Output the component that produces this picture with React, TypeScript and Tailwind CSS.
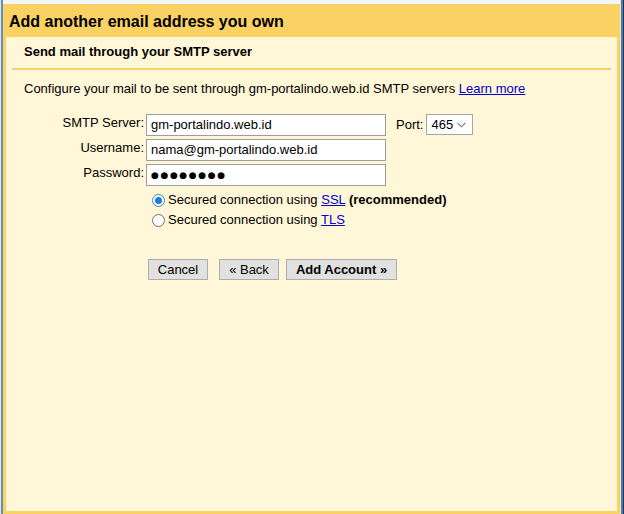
import React from "react";

function Radio({ checked }: { checked?: boolean }) {
  return (
    <span
      className={
        "flex items-center justify-center w-[13px] h-[13px] rounded-full border bg-white shrink-0 " +
        (checked ? "border-[#3c7fb1]" : "border-[#707070]")
      }
    >
      {checked ? <span className="block w-[7px] h-[7px] rounded-full bg-[#1e7bd9]" /> : null}
    </span>
  );
}

export default function App() {
  const font = { fontFamily: '"Liberation Sans", Arial, sans-serif' };
  return (
    <div className="w-[624px] h-[514px] flex overflow-hidden bg-[#f3f5f8] text-[13px] text-black" style={font}>
      {/* left frame */}
      <div className="w-[3px] h-full flex shrink-0">
        <div className="w-[1px] bg-[#dbe6f1]" />
        <div className="w-[2px] bg-[#6a8eb2]" />
      </div>

      {/* dialog */}
      <div className="w-[617px] h-full flex flex-col shrink-0">
        <div className="h-[4px] bg-[#f3f5f8]" />
        <div className="h-[33px] bg-[#fad163] flex items-center pl-[6px] pt-[2px]">
          <span className="text-[16px] font-bold leading-[18px]">Add another email address you own</span>
        </div>
        <div className="flex-1 bg-[#fad163] px-[3px] pb-[3px] flex">
          <div className="flex-1 bg-[#fff7d7] flex flex-col">
            <div className="mx-[6px] border-b-2 border-[#f5d06a] pt-[7px] pb-[8px] pl-[12px]">
              <span className="font-bold leading-[16px] block">Send mail through your SMTP server</span>
            </div>
            <div className="mt-[11px] pl-[18px] leading-[16px]">
              Configure your mail to be sent through gm-portalindo.web.id SMTP servers{" "}
              <a className="text-[#0000cc] underline" href="#">Learn more</a>
            </div>

            {/* form */}
            <div className="mt-[17px] flex flex-col gap-[3px]">
              <div className="flex items-start h-[22px]">
                <div className="w-[138px] text-right pt-[1px] leading-[16px]">SMTP Server:</div>
                <div className="ml-[2px] w-[240px] h-[22px] bg-white border border-[#9d9d9d] flex items-center pl-[4px] leading-[16px]">
                  gm-portalindo.web.id
                </div>
                <div className="ml-[10px] pt-[3px] leading-[16px]">Port:</div>
                <div className="ml-[3px] w-[47px] h-[21px] bg-white border border-[#a5a5a5] flex items-center pl-[4px] pr-[5px] justify-between">
                  <span className="leading-[16px]">465</span>
                  <svg width="9" height="6" viewBox="0 0 9 6" className="mr-[1px]">
                    <path d="M0.5 0.8 L4.5 4.8 L8.5 0.8" stroke="#7a7a7a" strokeWidth="1.1" fill="none" />
                  </svg>
                </div>
              </div>
              <div className="flex items-start h-[22px]">
                <div className="w-[138px] text-right pt-[1px] leading-[16px]">Username:</div>
                <div className="ml-[2px] w-[240px] h-[22px] bg-white border border-[#9d9d9d] flex items-center pl-[4px] leading-[16px]">
                  nama@gm-portalindo.web.id
                </div>
              </div>
              <div className="flex items-start h-[22px]">
                <div className="w-[138px] text-right pt-[1px] leading-[16px]">Password:</div>
                <div className="ml-[2px] w-[240px] h-[22px] bg-white border border-[#9d9d9d] flex items-center pl-[4px]">
                  <span className="text-[9px] tracking-[1.6px] leading-[16px]" style={{ fontFamily: '"DejaVu Sans", sans-serif' }}>
                    ●●●●●●●●
                  </span>
                </div>
              </div>
            </div>

            {/* radios */}
            <div className="mt-[4px] pl-[146px] flex flex-col">
              <div className="h-[20px] flex items-center">
                <Radio checked />
                <span className="ml-[3px] leading-[16px]">
                  Secured connection using <a className="text-[#0000cc] underline" href="#">SSL</a>{" "}
                  <b>(recommended)</b>
                </span>
              </div>
              <div className="h-[20px] flex items-center">
                <Radio />
                <span className="ml-[3px] leading-[16px]">
                  Secured connection using <a className="text-[#0000cc] underline" href="#">TLS</a>
                </span>
              </div>
            </div>

            {/* buttons */}
            <div className="mt-[29px] pl-[142px] flex items-center">
              <button className="w-[60px] h-[21px] bg-[#e1e1e1] border border-[#adadad] leading-[16px] text-[13px]">Cancel</button>
              <button className="ml-[11px] w-[60px] h-[21px] bg-[#e1e1e1] border border-[#adadad] leading-[16px] text-[13px]">« Back</button>
              <button className="ml-[7px] w-[111px] h-[21px] bg-[#e1e1e1] border border-[#adadad] leading-[16px] text-[13px] font-bold">Add Account »</button>
            </div>
          </div>
        </div>
      </div>

      {/* right frame */}
      <div className="w-[4px] h-full flex shrink-0">
        <div className="w-[1px] bg-[#dbe6f1]" />
        <div className="w-[2px] bg-[#4f7aa6]" />
        <div className="w-[1px] bg-[#24364a]" />
      </div>
    </div>
  );
}
